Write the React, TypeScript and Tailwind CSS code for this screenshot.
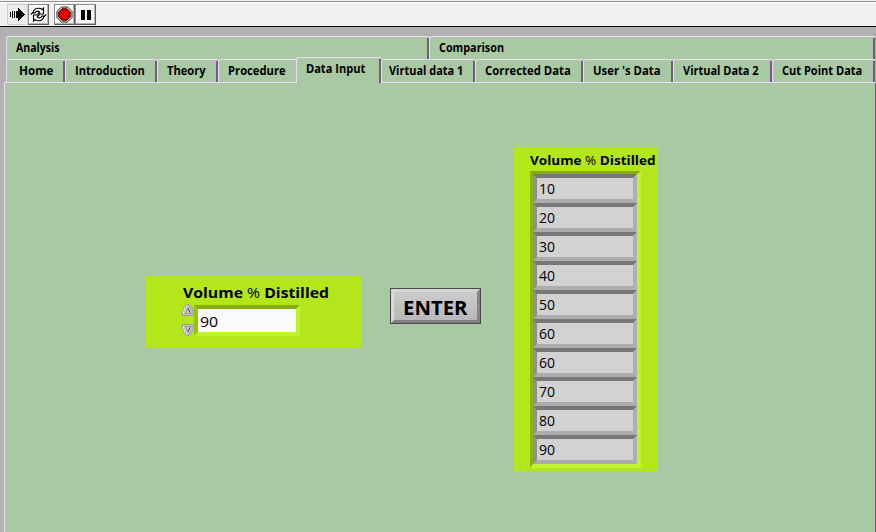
import { useLayoutEffect, useRef } from "react";
import type { ReactNode } from "react";

/** Text condensed or widened horizontally to an exact width. */
function Fit({ w, className = "", children }: { w: number; className?: string; children: ReactNode }) {
  const ref = useRef<HTMLSpanElement>(null);
  useLayoutEffect(() => {
    const el = ref.current;
    if (el) el.style.transform = `scaleX(${w / el.offsetWidth})`;
  }, [w]);
  return (
    <span className="block shrink-0" style={{ width: w }}>
      <span ref={ref} className={`block w-max origin-left whitespace-nowrap ${className}`}>
        {children}
      </span>
    </span>
  );
}

type TabInfo = { label: string; width: number; pad: number; text: number; active?: boolean; flat?: boolean };

const topTabs: TabInfo[] = [
  { label: "Analysis", width: 423, pad: 9, text: 44 },
  { label: "Comparison", width: 446, pad: 9, text: 65 },
];

const tabs: TabInfo[] = [
  { label: "Home", width: 59, pad: 12, text: 34 },
  { label: "Introduction", width: 92, pad: 9, text: 70 },
  { label: "Theory", width: 61, pad: 9, text: 39 },
  { label: "Procedure", width: 78, pad: 9, text: 58, flat: true },
  { label: "Data Input", width: 85, pad: 9, text: 59, active: true },
  { label: "Virtual data 1", width: 94, pad: 7, text: 74 },
  { label: "Corrected Data", width: 108, pad: 9, text: 86 },
  { label: "User 's Data", width: 90, pad: 9, text: 68 },
  { label: "Virtual Data 2", width: 99, pad: 9, text: 76 },
  { label: "Cut Point Data", width: 103, pad: 9, text: 80 },
];

function Tab({ t }: { t: TabInfo }) {
  return (
    <div
      className={`relative shrink-0 rounded-tl-[3px] border-l border-t border-[#eed9f8] bg-[#a8c9a4] ${
        t.active ? "z-10 -mt-0.5 h-[26px]" : "h-[23px]"
      }`}
      style={{ width: t.width, paddingLeft: t.pad }}
    >
      <Fit w={t.text} className="text-[12px] font-bold leading-[22px]">
        {t.label}
      </Fit>
      {!t.flat && <span className="absolute bottom-0 right-0 top-px w-0.5 bg-[#745a80]" />}
    </div>
  );
}

function ToolButton({ children, raised = true }: { children: ReactNode; raised?: boolean }) {
  return (
    <div
      className={`flex h-[21px] w-[21px] items-center justify-center border ${
        raised
          ? "border-b-[#606060] border-l-[#8c8c8c] border-r-[#606060] border-t-[#8c8c8c] bg-[#f6f6f6] shadow-[inset_-1px_-1px_0_#b4b4b4,inset_1px_1px_0_#ffffff]"
          : "border-[#cfcfcf] bg-[#ececec]"
      }`}
    >
      {children}
    </div>
  );
}

function Toolbar() {
  return (
    <div className="flex h-[27px] border-b border-black bg-[#f0f0f0] pl-[7px] pt-1 shadow-[inset_0_1px_0_#f0f0f0,inset_0_2px_0_#909090,inset_0_3px_0_#ffffff]">
      <ToolButton raised={false}>
        <svg width="17" height="15" viewBox="0 0 17 15" shapeRendering="crispEdges">
          <path d="M1 5h1v5H1zM3 4h1v7H3zM5 4h1v7H5zM7 4h2V1h1v1h1v1h1v1h1v1h1v1h1v1h1v1h-1v1h-1v1h-1v1h-1v1h-1v1h-1v1H9v-3H7z" />
        </svg>
      </ToolButton>
      <ToolButton>
        <svg width="17" height="17" viewBox="0 0 17 17" fill="white" stroke="black" strokeWidth="1.1" strokeLinejoin="miter">
          <path d="M3 6.500C4 3 7 1.500 10.500 2.500L12 3.500 13.500 2V8H8L9.700 6.200C8 4.500 6 4.800 5 7z" />
          <path d="M14 10.500C13 14 10 15.500 6.500 14.500L5 13.500 3.500 15V9H9L7.300 10.800C9 12.500 11 12.200 12 10z" />
          <path d="M.8 8.500 3 6.500M16.200 8.500 14 10.500" fill="none" />
        </svg>
      </ToolButton>
      <div className="w-[5px]" />
      <ToolButton>
        <svg width="17" height="17" viewBox="0 0 17 17">
          <path d="M5.500 1h6L16 5.500v6L11.500 16h-6L1 11.500v-6z" fill="#e8e8e8" stroke="#222" />
          <path d="M6 2.800h5L14.200 6v5L11 14.200H6L2.800 11V6z" fill="#e00000" stroke="#300" />
        </svg>
      </ToolButton>
      <ToolButton>
        <span className="flex gap-[2px]">
          <span className="h-[10px] w-1 bg-black" />
          <span className="h-[10px] w-1 bg-black" />
        </span>
      </ToolButton>
    </div>
  );
}

function Arrow({ down = false }: { down?: boolean }) {
  return (
    <svg width="12" height="12" viewBox="0 0 12 12" className={down ? "-scale-y-100" : ""}>
      <path d="M.5 11.500V7.500Q2.500 1 5 .5h2Q9.500 1 11.500 7.500v4z" fill="#bcbcb8" stroke="#969692" strokeWidth=".8" />
      <path d="M1.500 10V7.500Q3 3 5 1.500" fill="none" stroke="#eeeeee" />
      <path d="M6 4.500 3.500 9.500h5z" fill="#d2d2d2" stroke="#888" strokeWidth=".7" />
      <path d="M6 4.500 8 8.500" stroke="#333" strokeWidth=".9" />
    </svg>
  );
}

const values = [10, 20, 30, 40, 50, 60, 60, 70, 80, 90];

export default function App() {
  return (
    <div className="flex h-[532px] w-[876px] flex-col overflow-hidden bg-[#b1b1b1] font-['Open_Sans','Noto_Sans',sans-serif] text-black">
      <Toolbar />
      <div className="ml-1.5 mt-[9px] flex">
        {topTabs.map((t) => (
          <Tab key={t.label} t={t} />
        ))}
      </div>
      <div className="ml-1.5 flex h-[23px] shrink-0">
        {tabs.map((t) => (
          <Tab key={t.label} t={t} />
        ))}
      </div>
      <div className="ml-1 flex flex-1 items-start border-l border-r border-t border-l-[#eed9f8] border-r-[#745a80] border-t-[#eed9f8] bg-[#a8c9a4]">
        <div className="ml-[140px] mt-[193px] h-[72px] w-[217px] bg-[#b4e61c] pl-[37px] pt-[5px]">
          <div className="pb-px pl-px">
            <Fit w={146} className="text-[15px] font-bold leading-[22px]">
              Volume <span className="font-medium">%</span> Distilled
            </Fit>
          </div>
          <div className="flex">
            <div className="flex w-3 shrink-0 flex-col gap-2">
              <Arrow />
              <Arrow down />
            </div>
            <div className="mt-[1px] h-[31px] w-[106px] border-4 border-b-[#bff32d] border-l-[#95c20c] border-r-[#bff32d] border-t-[#85ad09] bg-[#fafafa] pl-[2px]">
              <Fit w={18} className="text-[15px] leading-[24px]">
                90
              </Fit>
            </div>
          </div>
        </div>
        <div className="ml-7 mt-[205px] h-9 w-[91px] border border-[#484848] bg-[#484848]">
          <div className="flex h-full border-[3px] border-b-[#808080] border-l-[#dadada] border-r-[#858585] border-t-[#d5d5d5] bg-linear-to-b from-[#cccccc] to-[#b8b8b8] pl-[9px]">
            <Fit w={64} className="text-[20px] font-bold leading-[31px]">
              ENTER
            </Fit>
          </div>
        </div>
        <div className="ml-[33px] mt-[64px] h-[324px] w-[144px] bg-[#b4e61c] pl-4 pt-[2px]">
          <Fit w={125} className="text-[13px] font-bold leading-[22px]">
            Volume <span className="font-medium">%</span> Distilled
          </Fit>
          <div className="w-[111px] border-[3px] border-r-4 border-b-[#bff32d] border-b-4 border-l-[#8ab40a] border-r-[#bff32d] border-t-[#85ad09]">
            {values.map((v, i) => (
              <div
                key={i}
                className="h-[29px] border-4 border-b-[#acacac] border-l-[#8f8f8f] border-r-[#b0b0b0] border-t-[#777777] bg-[#d2d2d2] pl-[2px]"
              >
                <Fit w={16} className="text-[14px] leading-[22px]">
                  {v}
                </Fit>
              </div>
            ))}
          </div>
        </div>
      </div>
    </div>
  );
}
